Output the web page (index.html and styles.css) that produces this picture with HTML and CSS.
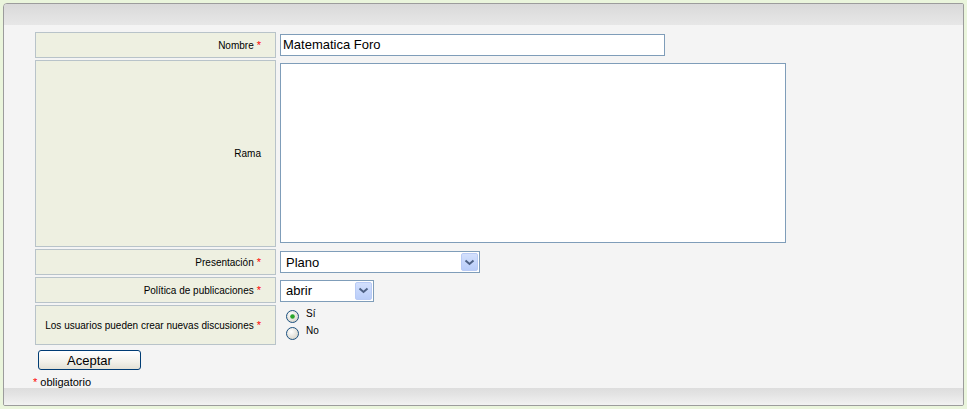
FILE: index.html
```html
<!DOCTYPE html>
<html lang="es">
<head>
<meta charset="utf-8">
<title>Foro</title>
<link rel="stylesheet" href="styles.css">
</head>
<body>
<div class="panel">
  <div class="panel-head"></div>
  <div class="panel-body">
    <div class="form">
      <div class="label">Nombre <span class="req">*</span></div>
      <div class="field"><div class="input">Matematica Foro</div></div>

      <div class="label label-top">Rama</div>
      <div class="field"><div class="textarea"></div></div>

      <div class="label">Presentación <span class="req">*</span></div>
      <div class="field">
        <div class="select select-wide"><span class="sel-text">Plano</span>
          <span class="sel-btn"><svg width="11" height="7" viewBox="0 0 11 7"><path d="M1.5 1.5 L5.5 5 L9.5 1.5" fill="none" stroke="#4d6185" stroke-width="2"/></svg></span>
        </div>
      </div>

      <div class="label">Política de publicaciones <span class="req">*</span></div>
      <div class="field">
        <div class="select select-narrow"><span class="sel-text">abrir</span>
          <span class="sel-btn"><svg width="11" height="7" viewBox="0 0 11 7"><path d="M1.5 1.5 L5.5 5 L9.5 1.5" fill="none" stroke="#4d6185" stroke-width="2"/></svg></span>
        </div>
      </div>

      <div class="label">Los usuarios pueden crear nuevas discusiones <span class="req">*</span></div>
      <div class="field radios">
        <div class="radio-row">
          <svg class="radio" width="13" height="13" viewBox="0 0 13 13"><defs><radialGradient id="rg" cx="0.4" cy="0.35" r="0.7"><stop offset="0" stop-color="#ffffff"/><stop offset="1" stop-color="#d6d3c8"/></radialGradient></defs><circle cx="6.5" cy="6.5" r="6" fill="url(#rg)" stroke="#1c5180" stroke-width="1"/><circle cx="6.5" cy="6.5" r="2.3" fill="#2aa52a"/></svg>
          <span>Sí</span>
        </div>
        <div class="radio-row">
          <svg class="radio" width="13" height="13" viewBox="0 0 13 13"><circle cx="6.5" cy="6.5" r="6" fill="url(#rg)" stroke="#1c5180" stroke-width="1"/></svg>
          <span>No</span>
        </div>
      </div>
    </div>
    <button class="btn" type="button">Aceptar</button>
    <div class="note"><span class="req">*</span> obligatorio</div>
  </div>
  <div class="panel-foot"></div>
</div>
</body>
</html>
```

FILE: styles.css
```css
html, body {
  margin: 0;
  padding: 0;
}
body {
  background: #eaf5dc;
  padding: 3px 3px 0 3px;
  font-family: "Liberation Sans", Arial, sans-serif;
  color: #000;
}
.panel {
  box-sizing: border-box;
  width: 961px;
  height: 403px;
  border: 1px solid #9c9c9c;
  border-radius: 4px 2px 2px 2px;
  background: #f4f4f4;
  display: flex;
  flex-direction: column;
  overflow: hidden;
}
.panel-head {
  height: 21px;
  flex: none;
  background: linear-gradient(#d9d9d9, #e7e7e7);
}
.panel-body {
  flex: 1;
  padding: 7px 0 0 31px;
}
.panel-foot {
  height: 17px;
  flex: none;
  background: linear-gradient(#dddddd, #e4e4e4 40%, #f2f2f2);
}
.form {
  display: grid;
  grid-template-columns: 241px 1fr;
  grid-template-rows: 26px 187px 26px 26px 40px;
  gap: 2px;
}
.label {
  box-sizing: border-box;
  background: #eef0e1;
  border: 1px solid #b8c3c9;
  font-size: 10px;
  display: flex;
  align-items: center;
  justify-content: flex-end;
  padding-right: 14px;
  white-space: nowrap;
}
.req {
  color: #ff0000;
  margin-left: 3px;
  font-size: 11px;
}
.field {
  display: flex;
  align-items: center;
  padding-left: 2px;
}
.input {
  box-sizing: border-box;
  width: 385px;
  height: 22px;
  border: 1px solid #7f9db9;
  background: #fff;
  font-size: 13px;
  line-height: 20px;
  padding-left: 2px;
}
.textarea {
  box-sizing: border-box;
  width: 506px;
  height: 180px;
  border: 1px solid #7f9db9;
  background: #fff;
  margin-top: -1px;
}
.select {
  box-sizing: border-box;
  height: 22px;
  border: 1px solid #7f9db9;
  background: #fff;
  display: flex;
  align-items: center;
  justify-content: space-between;
  padding: 1px;
}
.select-wide { width: 200px; }
.select-narrow { width: 94px; margin-top: 1px; }
.sel-text {
  font-size: 13px;
  padding-left: 4px;
}
.sel-btn {
  box-sizing: border-box;
  width: 17px;
  height: 18px;
  border: 1px solid #b9cbf5;
  border-radius: 2px;
  background: linear-gradient(#d3e0fd, #b9cdf9);
  display: flex;
  align-items: center;
  justify-content: center;
}
.radios {
  flex-direction: column;
  align-items: flex-start;
  justify-content: center;
  gap: 4px;
  padding-left: 8px;
}
.radio-row {
  display: flex;
  align-items: center;
  gap: 7px;
  font-size: 10px;
  height: 13px;
}
.radio-row span {
  position: relative;
  top: -3px;
}
.btn {
  display: block;
  box-sizing: border-box;
  width: 103px;
  height: 20px;
  margin: 5px 0 0 3px;
  padding: 0;
  border: 1px solid #003c74;
  border-radius: 3px;
  background: linear-gradient(#ffffff, #f2f1ea 60%, #e3e1d6);
  font-family: "Liberation Sans", Arial, sans-serif;
  font-size: 13px;
  color: #000;
}
.note {
  font-size: 11px;
  margin: 6px 0 0 -2px;
}
.note .req {
  margin-left: 0;
}
```
